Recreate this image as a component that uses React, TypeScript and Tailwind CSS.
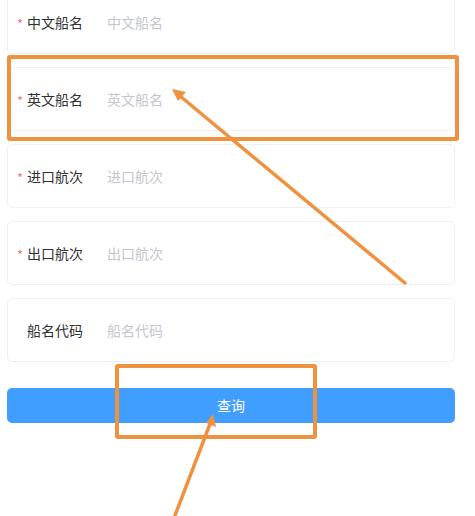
const fields = [
  { label: "中文船名", required: true },
  { label: "英文船名", required: true },
  { label: "进口航次", required: true },
  { label: "出口航次", required: true },
  { label: "船名代码", required: false },
];

function Field({ label, required }: { label: string; required: boolean }) {
  return (
    <div className="h-[64px] border border-[#eef0f4] rounded-[5px] flex items-center pl-[9px] bg-white">
      <span className="w-[10px] text-[13px] text-[#f07b7b] leading-none mt-[2px]">{required ? "*" : ""}</span>
      <label className="w-[80px] text-[14px] text-[#303133]">{label}</label>
      <input
        className="flex-1 text-[14px] outline-none placeholder:text-[#c3c6cc] bg-transparent"
        placeholder={label}
      />
    </div>
  );
}

export default function App() {
  return (
    <div
      className="relative w-[475px] h-[516px] overflow-hidden bg-white"
      style={{ fontFamily: '"Noto Sans CJK SC", "Noto Sans", sans-serif' }}
    >
      <div className="pl-[7px] pr-[20px] -mt-[10px] flex flex-col">
        <div className="flex flex-col gap-[13px]">
          {fields.map((f) => (
            <Field key={f.label} label={f.label} required={f.required} />
          ))}
        </div>
        <button className="mt-[26px] h-[35px] rounded-[5px] bg-[#409eff] text-white text-[14px]">
          查询
        </button>
      </div>

      {/* annotation layer */}
      <svg className="absolute inset-0 pointer-events-none" width="475" height="516">
        <g stroke="#f0913f" fill="none" strokeWidth="4">
          <rect x="9" y="57" width="448" height="82" rx="1" />
          <rect x="117" y="366" width="198" height="71" rx="1" />
        </g>
        <g stroke="#f0913f" strokeWidth="3.5" strokeLinecap="round">
          <line x1="405" y1="283" x2="180" y2="96" />
          <line x1="174" y1="518" x2="210" y2="424" />
        </g>
        <g fill="#f0913f">
          <polygon points="172,89 186,92 178,101" />
          <polygon points="213,414 216,427 206,423" />
        </g>
      </svg>
    </div>
  );
}
